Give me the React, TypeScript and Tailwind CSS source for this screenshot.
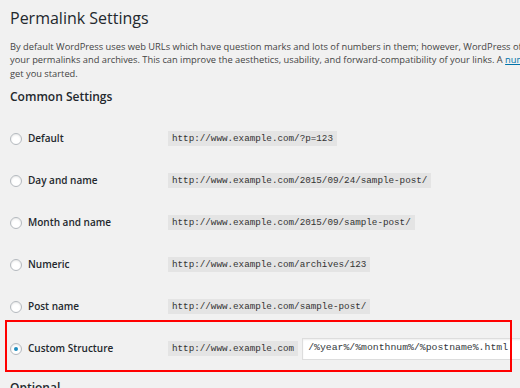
import React from 'react';

const rows = [
  { label: 'Default', url: 'http://www.example.com/?p=123' },
  { label: 'Day and name', url: 'http://www.example.com/2015/09/24/sample-post/' },
  { label: 'Month and name', url: 'http://www.example.com/2015/09/sample-post/' },
  { label: 'Numeric', url: 'http://www.example.com/archives/123' },
  { label: 'Post name', url: 'http://www.example.com/sample-post/' },
];

const Radio: React.FC<{ checked?: boolean }> = ({ checked }) => (
  <span className="flex h-[12px] w-[12px] shrink-0 items-center justify-center rounded-full border border-[#b4b9be] bg-white shadow-[inset_0_1px_2px_rgba(0,0,0,0.1)]">
    {checked && <span className="h-[4px] w-[4px] rounded-full bg-[#1e8cbe]" />}
  </span>
);

const Code: React.FC<{ children: React.ReactNode }> = ({ children }) => (
  <code className="shrink-0 bg-[#e4e4e4] px-[4px] py-[2px] font-['Liberation_Mono',monospace] text-[9.25px] leading-[11px] whitespace-nowrap text-[#333]">
    {children}
  </code>
);

export default function App() {
  return (
    <div className="h-[388px] w-[520px] overflow-hidden bg-[#f1f1f1] pt-[6px] pl-[10px] font-['Open_Sans',sans-serif] text-[#23282d]">
      <h1 className="text-[16px] leading-[24px] font-normal">Permalink Settings</h1>

      <div className="mt-[9.5px] text-[9.3px] leading-[13.5px] whitespace-nowrap text-[#444]">
        <p>
          By default WordPress uses web URLs which have question marks and lots of numbers in them; however, WordPress offers you the ability to create a custom URL structure for
        </p>
        <p>
          your permalinks and archives. This can improve the aesthetics, usability, and forward-compatibility of your links. A{' '}
          <span className="text-[#0073aa] underline">number of tags are available</span>, and here are some examples to
        </p>
        <p>get you started.</p>
      </div>

      <h2 className="mt-[9px] text-[12px] leading-[16px] font-semibold">Common Settings</h2>

      <div className="mt-[12.5px]">
        {rows.map((row) => (
          <div key={row.label} className="flex h-[42px] items-center">
            <div className="flex w-[158px] shrink-0 items-center gap-[6px]">
              <Radio />
              <span className="text-[10px] font-semibold">{row.label}</span>
            </div>
            <Code>{row.url}</Code>
          </div>
        ))}

        <div className="relative flex h-[42px] items-center">
          <div className="pointer-events-none absolute -top-[8px] -bottom-[2px] -left-[5px] w-[507px] border-2 border-[#ff0000]" />
          <div className="flex w-[158px] shrink-0 items-center gap-[6px]">
            <Radio checked />
            <span className="text-[10px] font-semibold">Custom Structure</span>
          </div>
          <Code>http://www.example.com</Code>
          <div className="ml-[4px] flex h-[22px] w-[240px] shrink-0 items-center border border-[#ddd] bg-white pl-[5px] shadow-[inset_0_1px_2px_rgba(0,0,0,0.07)] font-['Liberation_Mono',monospace] text-[9.8px] whitespace-nowrap text-[#32373c]">
            /%year%/%monthnum%/%postname%.html
          </div>
        </div>
      </div>

      <h2 className="mt-[10px] text-[12px] leading-[16px] font-semibold">Optional</h2>
    </div>
  );
}
